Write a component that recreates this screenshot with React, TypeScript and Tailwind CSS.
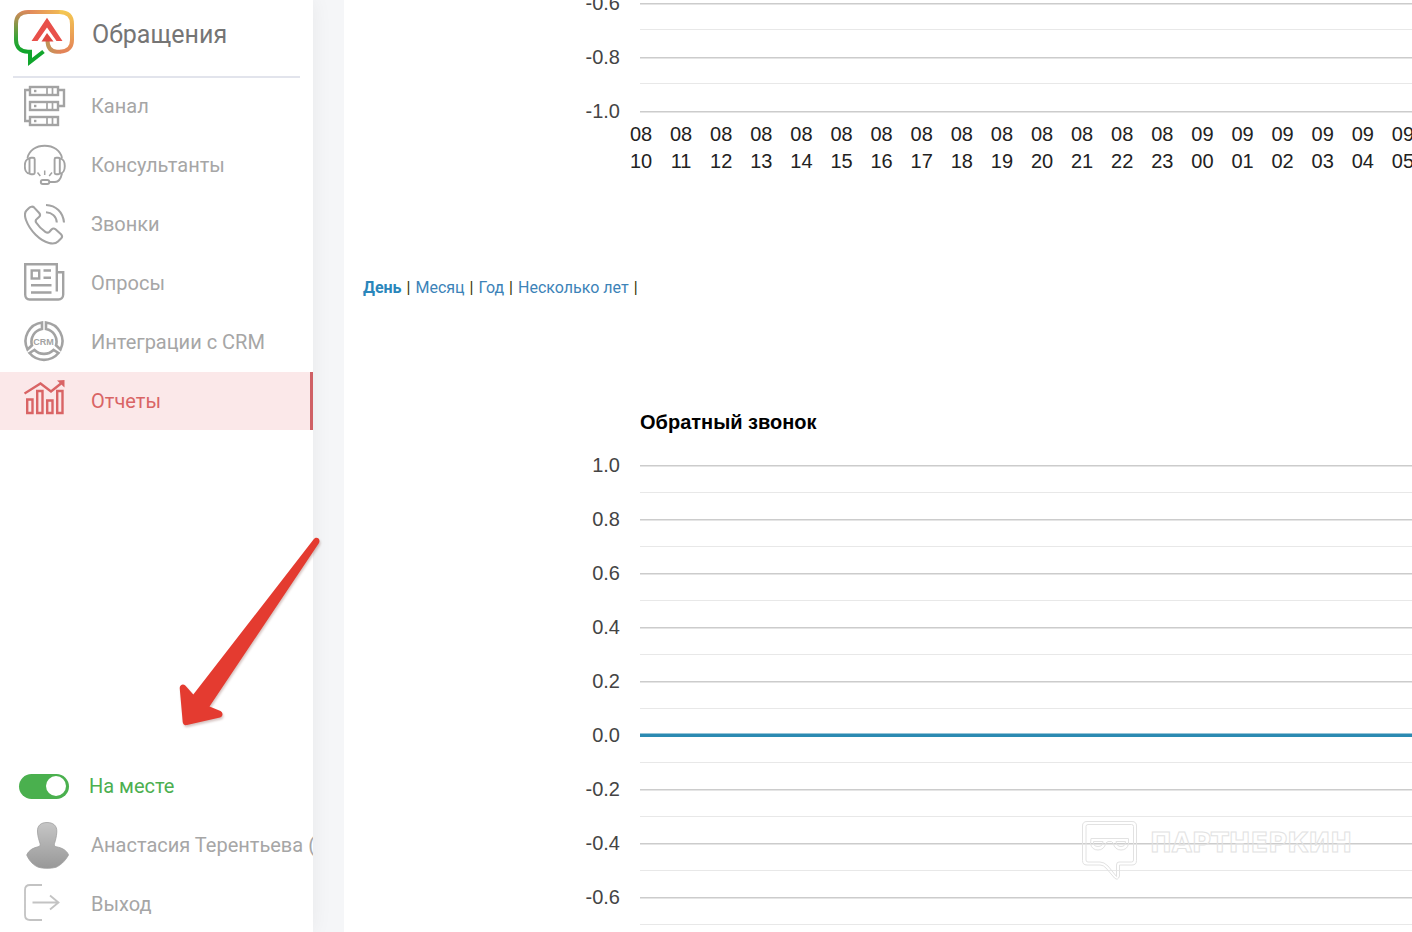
import type { ReactNode } from 'react'

const GRAY = '#a3a3a3'
const RED = '#d96465'

function Icon({ y, color = GRAY, width = 2.4, children }: { y: number; color?: string; width?: number; children: ReactNode }) {
  return (
    <svg
      className="h-[42px] w-[42px] shrink-0"
      viewBox={`24 ${y} 42 42`}
      fill="none"
      stroke={color}
      strokeWidth={width}
      aria-hidden="true"
    >
      {children}
    </svg>
  )
}

const navItems = [
  {
    label: 'Канал',
    icon: (
      <Icon y={85}>
        <path d="M30 90H25V121H30M59 90H64V106H59" />
        {[87, 102, 117].map((y) => (
          <g key={y}>
            <rect x="30" y={y} width="28" height="8" />
            <path d={`M47 ${y}v8M52.5 ${y}v8`} strokeWidth="1.7" />
            <rect x="34" y={y + 2.8} width="2.4" height="2.4" fill={GRAY} stroke="none" />
          </g>
        ))}
      </Icon>
    ),
  },
  {
    label: 'Консультанты',
    icon: (
      <Icon y={144} width={1.9}>
        <path d="M27.5 158C29 150.500 36 145.800 44.700 145.800S60.500 150.500 62 158" />
        <rect x="29.500" y="157.800" width="5.200" height="16.500" rx="1.500" />
        <path d="M29.500 158.500C26.500 158.500 24.800 162 24.800 166S26.500 173.500 29.500 173.500" />
        <rect x="54.600" y="157.800" width="5.200" height="16.500" rx="1.500" />
        <path d="M60 158.500C63 158.500 64.800 162 64.800 166S63 173.500 60 173.500" />
        <path d="M62 173.500C61 178 59 182 55 182H49.500" />
        <rect x="40.800" y="180" width="8.500" height="4" rx="2" />
        <path d="M44.700 170.500V175M37.500 172.500L40.300 176M52 172.500L49.200 176" strokeWidth="1.500" />
      </Icon>
    ),
  },
  {
    label: 'Звонки',
    icon: (
      <Icon y={203} width={2.1}>
        <path
          strokeLinejoin="round"
          d="M29 208L26.500 210.500C24.500 212.500 24.600 216 26 220C30 231 40 240.500 49 243C53.500 244.200 56 243.500 58 241.500L61 238.500C62.300 237.200 62.200 235.500 61 234.300L55.500 229.300C54.200 228.200 52.700 228.300 51.500 229.500L49.500 231.800C48.300 233 46.800 232.800 45.300 231.800C41.500 229.300 38.500 226.200 36.300 222.800C35.400 221.400 35.500 220 36.800 219L39 217C40.300 215.800 40.300 214.300 39.200 213L34.200 207.600C32.800 206.200 30.500 206.400 29 208Z"
        />
        <path d="M46 205C56 205.500 63 212 64 222.500M46 212.300C52 212.800 56.300 216.500 56.800 222.500" />
      </Icon>
    ),
  },
  {
    label: 'Опросы',
    icon: (
      <Icon y={262}>
        <path d="M56.800 291.500V264.200H25.200V294.500C25.200 297.500 27 299.500 29.500 299.500H58.500C61 299.500 63.200 297.500 63.200 294.500V272.300H57" />
        <rect x="31.700" y="270.500" width="7.500" height="8" />
        <path d="M43.500 270.500H51M43.500 277.800H51M31 285.200H51.500M31 292.500H51.500" />
      </Icon>
    ),
  },
  {
    label: 'Интеграции с CRM',
    icon: (
      <Icon y={321} width={2.6}>
        <path d="M42 322.500V329A12.800 12.800 0 0 0 32 345.300L27.500 349.500A18.800 18.800 0 0 1 42 322.500Z" />
        <path d="M46 322.500V329A12.800 12.800 0 0 1 56 345.300L60.500 349.500A18.800 18.800 0 0 0 46 322.500Z" />
        <path d="M29.500 353L34.500 350A13.500 13.500 0 0 0 53.500 350L58.500 353A18.800 18.800 0 0 1 29.500 353Z" />
        <text x="43.500" y="345" fontSize="9" fontWeight="700" textAnchor="middle" fill={GRAY} stroke="none" className="font-['Liberation_Sans',sans-serif]">
          CRM
        </text>
      </Icon>
    ),
  },
  {
    label: 'Отчеты',
    active: true,
    icon: (
      <Icon y={380} color={RED}>
        <path d="M24.500 393.500L40.500 383.500L51 391.500L61 383.500" />
        <path d="M57 380.500L64.500 380V387.500Z" fill={RED} stroke="none" />
        <path d="M27.200 399.500h5.300v13.500h-5.300zM37.200 391h5.300v22h-5.300zM47.200 400.500h5.300v12.500h-5.300zM57.200 391h5.300v22h-5.300z" />
      </Icon>
    ),
  },
]

const hours = [
  '08 10', '08 11', '08 12', '08 13', '08 14', '08 15', '08 16', '08 17', '08 18', '08 19',
  '08 20', '08 21', '08 22', '08 23', '09 00', '09 01', '09 02', '09 03', '09 04', '09 05',
]

function GridLines({ labels, top }: { labels: string[]; top: number }) {
  return (
    <>
      {labels.map((label, i) => (
        <g key={label}>
          <rect x="296" y={top + i * 54} width="100%" height="1.5" fill="#cccccc" />
          <text x="276" y={top + 7 + i * 54} textAnchor="end" fill="#444444">
            {label}
          </text>
        </g>
      ))}
    </>
  )
}

function MinorLines({ count, top }: { count: number; top: number }) {
  return (
    <>
      {Array.from({ length: count }, (_, i) => (
        <rect key={i} x="296" y={top + i * 54} width="100%" height="1" fill="#e8e8e8" />
      ))}
    </>
  )
}

function Logo() {
  return (
    <svg className="h-[58px] w-[62px] shrink-0" viewBox="13 9 62 58" fill="none" aria-hidden="true">
      <defs>
        <linearGradient id="left" gradientUnits="userSpaceOnUse" x1="24" y1="52" x2="28" y2="10">
          <stop offset="0" stopColor="#10a52c" />
          <stop offset="0.3" stopColor="#35a436" />
          <stop offset="1" stopColor="#e2875c" />
        </linearGradient>
        <linearGradient id="top" gradientUnits="userSpaceOnUse" x1="28" y1="0" x2="66" y2="0">
          <stop offset="0" stopColor="#e2875c" />
          <stop offset="1" stopColor="#f3c152" />
        </linearGradient>
        <linearGradient id="right" gradientUnits="userSpaceOnUse" x1="68" y1="12" x2="66" y2="52">
          <stop offset="0" stopColor="#f4c652" />
          <stop offset="1" stopColor="#e38358" />
        </linearGradient>
        <linearGradient id="hook" gradientUnits="userSpaceOnUse" x1="46" y1="0" x2="62" y2="0">
          <stop offset="0" stopColor="#bd9559" />
          <stop offset="1" stopColor="#e38358" />
        </linearGradient>
      </defs>
      <g strokeWidth="4">
        <path d="M43.500 51.500L30 62V51.700H28C20 51.700 16 46.500 16 40V24C16 16.500 20 12 28 12H30" stroke="url(#left)" />
        <path d="M30 12H60" stroke="url(#top)" />
        <path d="M59.500 12C68 12 72 16.500 72 24V40C72 47 68 51.700 60 51.700" stroke="url(#right)" />
        <path d="M60.500 51.700H57C50 51.700 47.500 47 47.500 40" stroke="url(#hook)" />
      </g>
      <path d="M47 17.800L62.500 41H56.500L47 27.500L37.500 41H31.500Z" fill="#e8504a" />
      <path d="M47 33L53.500 41.500H41.500Z" fill="#e04840" />
    </svg>
  )
}

function Sidebar() {
  return (
    <aside className="z-10 flex w-[313px] shrink-0 flex-col overflow-hidden bg-white text-xl text-[#a6a6a6] shadow-[0_0_20px_rgba(0,0,0,0.06)]">
      <div className="mx-[13px] flex h-[78px] shrink-0 items-start gap-[17px] border-b-2 border-[#e2e4ec] pt-[9px] text-[#757575]">
        <Logo />
        <h1 className="pt-2 text-[25px] leading-9">Обращения</h1>
      </div>
      <nav className="-mt-px flex flex-col gap-px">
        {navItems.map((item) => (
          <a
            key={item.label}
            href="#"
            className={
              item.active
                ? 'flex h-[58px] items-center gap-[25px] border-r-[3px] border-[#cf6065] bg-[#fbe8e9] pl-6 text-[#d96465]'
                : 'flex h-[58px] items-center gap-[25px] pl-6'
            }
          >
            {item.icon}
            <span>{item.label}</span>
          </a>
        ))}
      </nav>
      <div className="mt-auto flex flex-col gap-[3px]">
        <label className="flex h-14 items-center gap-5 pl-[19px] text-[#4caf50]">
          <span className="relative flex">
            <input type="checkbox" defaultChecked className="peer h-[25px] w-[50px] appearance-none rounded-full bg-gray-300 checked:bg-[#4ab04e]" />
            <span className="pointer-events-none absolute top-[2px] left-[3px] size-5 rounded-full bg-white peer-checked:left-[27px]" />
          </span>
          <span>На месте</span>
        </label>
        <a href="#" className="flex h-14 items-center gap-[22px] pl-[26px] whitespace-nowrap">
          <svg className="h-[48px] w-[43px] shrink-0" viewBox="26 821 43 48" aria-hidden="true">
            <defs>
              <linearGradient id="avatar" x1="0" y1="0" x2="0" y2="1">
                <stop offset="0" stopColor="#c6c6c6" />
                <stop offset="1" stopColor="#989898" />
              </linearGradient>
            </defs>
            <path
              d="M47 822.500C53 822.500 57.200 825.500 56.800 832C56.500 837 55.500 840 54.500 843.500C54 845.500 54.500 846.300 56.500 846.800C62 847.800 67 850.500 68.500 855C65 861.500 60 865.500 56 867.300C51 868.700 43 868.700 38.500 867.300C34 865.500 29.500 861.500 26.700 855C28.500 850.500 33 847.800 38 846.800C40 846.300 40.500 845.500 40 843.500C39 840 37.800 837 37.500 832C37 825.500 41 822.500 47 822.500Z"
              fill="url(#avatar)"
              stroke="#a0a0a0"
              strokeWidth="0.800"
            />
          </svg>
          <span>Анастасия Терентьева (</span>
        </a>
        <a href="#" className="flex h-14 items-center gap-[25px] pl-6">
          <Icon y={883} color="#c3c3c3" width={1.8}>
            <path d="M42 885H30C27 885 25 887 25 890V915C25 918 27 920 30 920H42M32.500 902.500H58.500M50 895.500L58.500 902.500L50 909.500" />
          </Icon>
          <span>Выход</span>
        </a>
      </div>
    </aside>
  )
}

export default function App() {
  return (
    <div className="relative flex h-screen overflow-hidden bg-[#f5f6f8] font-[Roboto,sans-serif]">
      <Sidebar />
      <main className="ml-[31px] min-w-0 flex-1 bg-white">
        <svg className="block h-[276px] w-full font-['Liberation_Sans',sans-serif] text-xl" role="img" aria-label="График по часам">
          <MinorLines count={2} top={29} />
          <GridLines labels={['-0.6', '-0.8', '-1.0']} top={3} />
          {hours.map((hour, i) => {
            const [day, time] = hour.split(' ')
            return (
              <g key={hour} textAnchor="middle" fill="#222222">
                <text x={297 + i * 40.1} y="141">{day}</text>
                <text x={297 + i * 40.1} y="168">{time}</text>
              </g>
            )
          })}
        </svg>

        <div className="flex gap-[5px] pl-[19px] text-base leading-6 text-[#333300]">
          <a href="#" className="font-bold text-[#2a86bb]">День</a>
          <span>|</span>
          <a href="#" className="text-[#3c83b8]">Месяц</a>
          <span>|</span>
          <a href="#" className="text-[#3c83b8]">Год</a>
          <span>|</span>
          <a href="#" className="text-[#3c83b8]">Несколько лет</a>
          <span>|</span>
        </div>

        <svg className="mt-[100px] block h-[533px] w-full font-['Liberation_Sans',sans-serif] text-xl" role="img" aria-label="Обратный звонок">
          <text x="296" y="29" fontWeight="700" fill="#000000">
            Обратный звонок
          </text>
          <MinorLines count={9} top={92} />
          <GridLines labels={['1.0', '0.8', '0.6', '0.4', '0.2', '0.0', '-0.2', '-0.4', '-0.6']} top={65} />
          <rect x="296" y="333.500" width="100%" height="3.500" fill="#2b8ab2" />
        </svg>
      </main>

      {/* Arrow pointing at the status switch */}
      <svg className="pointer-events-none absolute top-[530px] left-[170px] z-20 h-[204px] w-[160px]" viewBox="170 530 160 204" aria-hidden="true">
        <path
          d="M313.500 539.500C316 536 321 538.500 319 543L209.500 706.500L220.500 711C223.500 713 223 716.500 220 717.500L187 725C184.500 725.500 183 724.500 182.700 722L179.700 688C179.800 684.500 183.300 683.500 185.300 685.500L193.300 694.500Z"
          fill="#e43b30"
          className="drop-shadow-[1px_2px_1px_rgba(90,20,10,0.25)]"
        />
      </svg>

      {/* Watermark */}
      <svg className="pointer-events-none absolute right-[48px] bottom-[48px] h-[64px] w-[284px]" viewBox="1080 820 284 64" fill="none" stroke="#e2e2e2" strokeWidth="1">
        <path d="M1087 821.500H1132Q1136.500 821.500 1136.500 826V860.500Q1136.500 865 1132 865H1119.500V876Q1118 881 1114.500 878L1106 868Q1103.500 865 1100 865H1087Q1082.500 865 1082.500 860.500V826Q1082.500 821.500 1087 821.500Z" />
        <path d="M1088 824.500H1131.500Q1133.500 824.500 1133.500 826.500V860Q1133.500 862 1131.500 862H1119Q1116.500 862 1116.500 865V876.500L1108 866Q1104 862 1100 862H1088Q1086 862 1086 860V826.500Q1086 824.500 1088 824.500Z" />
        <path d="M1091 838.500H1128.500V844Q1127 850 1121 850T1113 843L1111.500 841.500H1108L1106 843Q1104 850 1098 850T1090.500 844Z" />
        <path d="M1093.500 841.500H1103Q1103 846.500 1098 846.500T1093.500 841.500ZM1116 841.500H1125.500Q1125.500 846.500 1121 846.500T1116 841.500Z" />
        <text x="1150" y="852" fontSize="26" fontWeight="700" className="font-['DejaVu_Sans',sans-serif]">
          ПАРТНЕРКИН
        </text>
      </svg>
    </div>
  )
}
